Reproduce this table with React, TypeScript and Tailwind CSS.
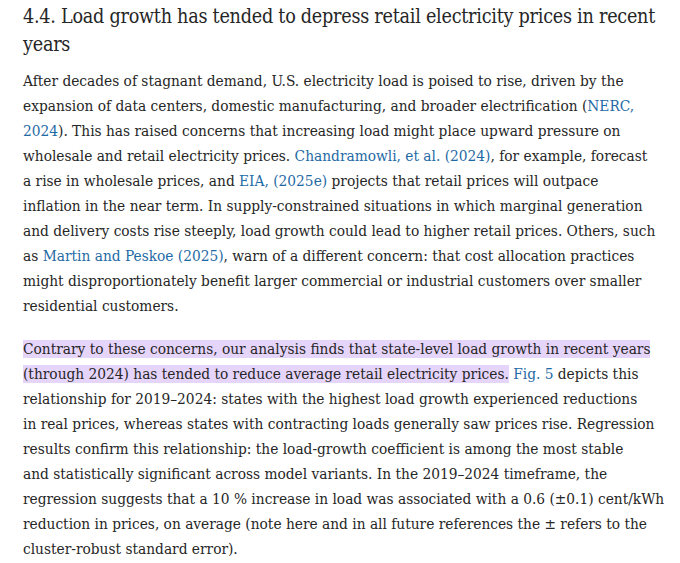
import React from "react";

const L = ({ children }: { children: React.ReactNode }) => (
  <span className="text-[#1f6aa5]">{children}</span>
);
const H = ({ children }: { children: React.ReactNode }) => (
  <span className="bg-[#e6d5fb]">{children}</span>
);

export default function App() {
  return (
    <div className="w-[680px] h-[563px] overflow-hidden bg-white text-[#262626] px-[23px] pt-[3px]" style={{ fontFamily: '"DejaVu Serif Condensed", "DejaVu Serif", serif', fontStretch: "condensed" }}>
      <h2 className="text-[19.6px] leading-[28px] font-normal tracking-[-0.25px]">
        <span className="block whitespace-nowrap">4.4. Load growth has tended to depress retail electricity prices in recent</span>
        <span className="block">years</span>
      </h2>
      <div className="mt-[10px] text-[15.3px] leading-[25px]">
        <p>
          <span className="block whitespace-nowrap">After decades of stagnant demand, U.S. electricity load is poised to rise, driven by the</span>
          <span className="block whitespace-nowrap">expansion of data centers, domestic manufacturing, and broader electrification (<L>NERC,</L></span>
          <span className="block whitespace-nowrap"><L>2024</L>). This has raised concerns that increasing load might place upward pressure on</span>
          <span className="block whitespace-nowrap">wholesale and retail electricity prices. <L>Chandramowli, et al. (2024)</L>, for example, forecast</span>
          <span className="block whitespace-nowrap">a rise in wholesale prices, and <L>EIA, (2025e)</L> projects that retail prices will outpace</span>
          <span className="block whitespace-nowrap">inflation in the near term. In supply-constrained situations in which marginal generation</span>
          <span className="block whitespace-nowrap">and delivery costs rise steeply, load growth could lead to higher retail prices. Others, such</span>
          <span className="block whitespace-nowrap">as <L>Martin and Peskoe (2025)</L>, warn of a different concern: that cost allocation practices</span>
          <span className="block whitespace-nowrap">might disproportionately benefit larger commercial or industrial customers over smaller</span>
          <span className="block whitespace-nowrap">residential customers.</span>
        </p>
        <p className="mt-[18px]">
          <span className="block whitespace-nowrap"><H>Contrary to these concerns, our analysis finds that state-level load growth in recent years</H></span>
          <span className="block whitespace-nowrap"><H>(through 2024) has tended to reduce average retail electricity prices.</H> <L>Fig. 5</L> depicts this</span>
          <span className="block whitespace-nowrap">relationship for 2019–2024: states with the highest load growth experienced reductions</span>
          <span className="block whitespace-nowrap">in real prices, whereas states with contracting loads generally saw prices rise. Regression</span>
          <span className="block whitespace-nowrap">results confirm this relationship: the load-growth coefficient is among the most stable</span>
          <span className="block whitespace-nowrap">and statistically significant across model variants. In the 2019–2024 timeframe, the</span>
          <span className="block whitespace-nowrap">regression suggests that a 10 % increase in load was associated with a 0.6 (±0.1) cent/kWh</span>
          <span className="block whitespace-nowrap">reduction in prices, on average (note here and in all future references the ± refers to the</span>
          <span className="block whitespace-nowrap">cluster-robust standard error).</span>
        </p>
      </div>
    </div>
  );
}
